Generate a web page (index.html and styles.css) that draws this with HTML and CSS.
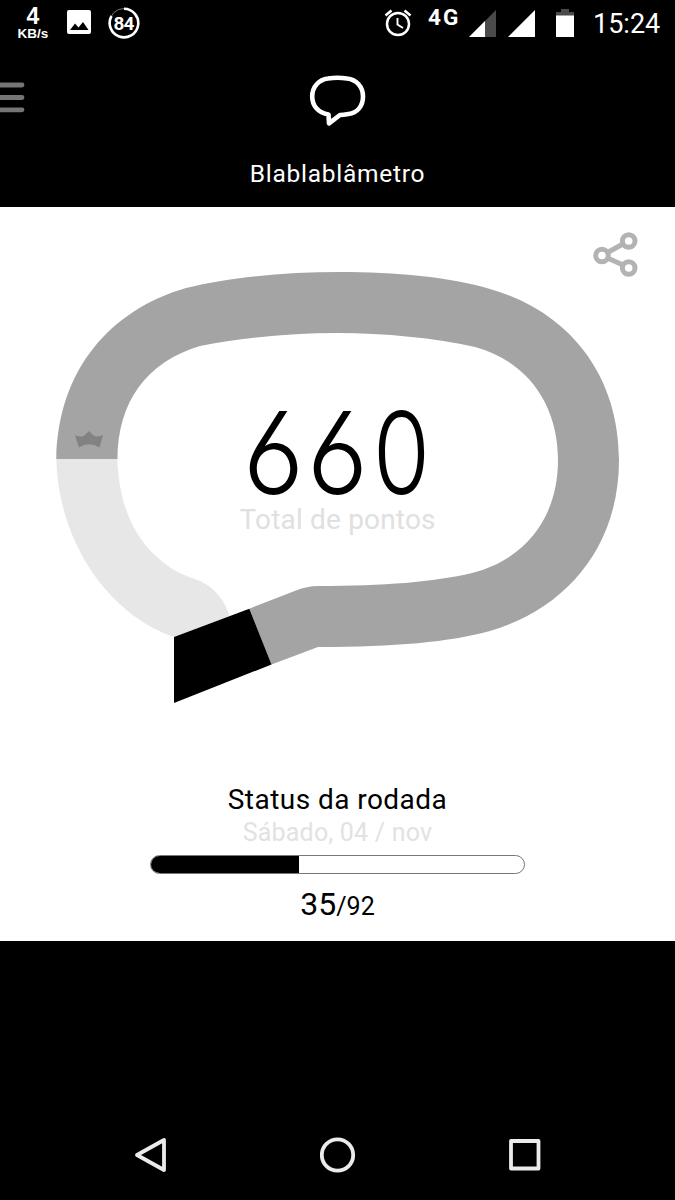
FILE: index.html
```
<!DOCTYPE html>
<html lang="pt-BR">
<head>
    <meta charset="UTF-8">
    <meta name="viewport" content="width=device-width, initial-scale=1.0">
    <title>Blablablâmetro</title>
    <link rel="stylesheet" href="styles.css">
</head>
<body>

    <div class="status-bar">
        <div class="speed">
            <span class="speed-value">4</span>
            <span class="speed-unit">KB/s</span>
        </div>
        <svg class="picture-icon" width="24" height="24" viewBox="0 0 24 24">
            <rect width="24" height="24" rx="2" fill="#fff"/>
            <path d="M3 20l5-6.5 3.5 4L16 12l5.5 8z" fill="#000"/>
        </svg>
        <svg class="percent-icon" width="32" height="32" viewBox="0 0 32 32">
            <circle cx="16" cy="16" r="14.5" fill="none" stroke="#777" stroke-width="1"/>
            <path d="M16 1.7A14.3 14.3 0 1 1 3.5 9" fill="none" stroke="#fff" stroke-width="2.6"/>
            <text x="16" y="22.5" text-anchor="middle" textLength="21" class="percent-text">84</text>
        </svg>
        <svg class="alarm-icon" width="28" height="28" viewBox="0 0 28 28">
            <g fill="none" stroke="#fff">
                <circle cx="14" cy="15" r="11" stroke-width="2.5"/>
                <path d="M1.5 6.5L7.5 1.5M26.5 6.5L20.5 1.5" stroke-width="2.6"/>
                <path d="M13.5 9v6.5l5.5 3.5" stroke-width="1.9"/>
            </g>
        </svg>
        <span class="network">4G</span>
        <svg class="signal-one" width="27" height="27" viewBox="0 0 27 27">
            <path d="M27 0v27H0z" fill="#4a4a4a"/>
            <path d="M16 11v16H0z" fill="#fff"/>
        </svg>
        <svg class="signal-two" width="27" height="27" viewBox="0 0 27 27">
            <path d="M27 0v27H0z" fill="#fff"/>
        </svg>
        <svg class="battery-icon" width="18" height="28" viewBox="0 0 18 28">
            <path d="M5 0h8v3h5v5H0V3h5z" fill="#4a4a4a"/>
            <path d="M0 6.5h18V28H0z" fill="#fff"/>
        </svg>
        <span class="clock">15:24</span>
    </div>

    <div class="header">
        <svg class="menu-icon" width="25" height="31" viewBox="0 0 25 31">
            <path d="M-3 3H22M-3 15.5H22M-3 27.8H22" stroke="#757575" stroke-width="4.8" stroke-linecap="round"/>
        </svg>
        <svg class="logo" width="58" height="54" viewBox="0 0 58 54">
            <path d="M19.5 40.5C9 39 3.2 31.5 3.2 22.5C3.2 12.5 10 5.7 19 4.5Q28.5 3 38 4.5C47.5 5.7 54 12.5 54 22.5C54 32.5 48 39 39.5 40Q34 41 31 41L20 49.3z" fill="none" stroke="#fff" stroke-width="4.6" stroke-linejoin="round"/>
        </svg>
        <h1>Blablablâmetro</h1>
    </div>

    <div class="content">
        <svg class="share-icon" width="46" height="46" viewBox="0 0 46 46">
            <g fill="none" stroke="#b3b3b3">
                <path d="M14.5 20.5L30 12M14.5 26L30 33" stroke-width="5"/>
                <circle cx="9" cy="23.5" r="6.3" stroke-width="5"/>
                <circle cx="35.7" cy="9" r="6.3" stroke-width="5"/>
                <circle cx="35.7" cy="36" r="6.3" stroke-width="5"/>
            </g>
        </svg>

        <svg class="gauge" width="675" height="440" viewBox="0 270 675 440">
            <path class="gauge-rest" d="M56.3 459C58 540 107 614 174 637L229.5 616C226 602 214 587 200 581C184 575 175 572 164 563C134 540 119 505 117.3 459z"/>
            <path class="gauge-fill" d="M56.3 459C58 370 110 310 186 288C230 277 285 272 340 272C395 272 450 277 490 289C565 310 619 371 619 460C619 548 565 609 490 631C450 642 395 647 318 647L271.5 664.5L249.3 608.7L296 590.5Q307 586 318 586C385 586 433 582 472 573C530 558 558 513 558 460C558 407 530 362 475 347C435 338 385 333 337 333C290 333 240 338 200 346C146 362 117.5 403 117.5 459z"/>
            <path class="gauge-start" d="M174 637L249.3 608.7L271.5 664.5L174 703z"/>
            <path class="crown" d="M75 435Q82 438 85 435L89 431L93 435Q96 438 103 435L99.5 447.5Q89 441 79 447.5z"/>
            <text class="points">
                <tspan x="243" y="493.5" textLength="61" lengthAdjust="spacingAndGlyphs">6</tspan><tspan x="307" y="493.5" textLength="61" lengthAdjust="spacingAndGlyphs">6</tspan><tspan x="373" y="493.5" textLength="57" lengthAdjust="spacingAndGlyphs">0</tspan>
            </text>
            <text class="points-label" x="239.5" y="529" textLength="196">Total de pontos</text>
        </svg>

        <div class="round">
            <h2>Status da rodada</h2>
            <p class="date">Sábado, 04 / nov</p>
            <div class="progress">
                <div class="progress-fill" style="width: 39.7%"></div>
            </div>
            <p class="score">35<span>/92</span></p>
        </div>
    </div>

    <div class="nav">
        <svg width="36" height="36" viewBox="0 0 36 36">
            <path d="M31 3v30L4 18z"/>
        </svg>
        <svg width="36" height="36" viewBox="0 0 36 36">
            <circle cx="17.5" cy="18" r="15.7"/>
        </svg>
        <svg width="36" height="36" viewBox="0 0 36 36">
            <rect x="4" y="4" width="27.5" height="27.5"/>
        </svg>
    </div>

</body>
</html>
```
FILE: styles.css
```
body {
    font-family: Roboto, sans-serif;
    margin: 0;
    padding: 0;
    height: 1200px;
    background-color: #000;
    display: flex;
    flex-direction: column;
    overflow: hidden;
}
svg {
    display: block;
    flex: none;
}
h1, h2, p {
    margin: 0;
    font-weight: normal;
}
.status-bar {
    height: 48px;
    display: flex;
    align-items: flex-start;
    color: white;
}
.speed {
    width: 34px;
    margin-left: 16px;
    padding-top: 7px;
    display: flex;
    flex-direction: column;
    align-items: center;
    font-family: "Liberation Sans", Arial, sans-serif;
    font-weight: bold;
}
.speed-value {
    font-size: 23px;
    line-height: 19px;
}
.speed-unit {
    font-size: 13.5px;
    line-height: 15px;
}
.picture-icon {
    margin: 10px 0 0 17px;
}
.percent-icon {
    margin: 7px 0 0 17px;
}
.percent-text {
    font-size: 19px;
    font-weight: bold;
    fill: white;
}
.alarm-icon {
    margin: 9px 0 0 244px;
}
.network {
    width: 34px;
    margin: 6px 0 0 16px;
    font-size: 22.5px;
    line-height: 22px;
    font-weight: bold;
    letter-spacing: 2px;
}
.signal-one {
    margin: 10px 0 0 7px;
}
.signal-two {
    margin: 10px 0 0 12px;
}
.battery-icon {
    margin: 9px 0 0 21px;
}
.clock {
    margin: 8px 0 0 19px;
    font-size: 27px;
    line-height: 32px;
}
.header {
    height: 159px;
    display: grid;
    grid-template-columns: 25px 1fr 25px;
    grid-template-rows: 110px 1fr;
    color: white;
}
.menu-icon {
    margin-top: 34px;
}
.logo {
    margin-top: 26px;
    justify-self: center;
}
.header h1 {
    grid-column: 1 / 4;
    text-align: center;
    font-size: 24.5px;
    line-height: 31px;
    letter-spacing: 0.75px;
}
.content {
    position: relative;
    height: 671px;
    padding-top: 63px;
    background-color: white;
}
.share-icon {
    position: absolute;
    top: 25px;
    right: 36px;
}
.gauge-fill {
    fill: #a4a4a4;
}
.gauge-rest {
    fill: #e7e7e7;
}
.gauge-start {
    fill: #000;
}
.crown {
    fill: #828282;
}
.points {
    font-family: Inter, sans-serif;
    font-size: 114px;
    font-weight: 300;
    font-feature-settings: "ss01", "cv03";
}
.points-label {
    font-size: 28px;
    fill: #e0e0e0;
}
.round {
    padding-top: 73px;
    display: flex;
    flex-direction: column;
    align-items: center;
}
.round h2 {
    font-size: 28px;
    line-height: 34px;
    letter-spacing: 0.45px;
}
.date {
    color: #e2e2e2;
    font-size: 25px;
    line-height: 31px;
    letter-spacing: 0.2px;
}
.progress {
    box-sizing: border-box;
    width: 375px;
    height: 19px;
    margin-top: 7px;
    border: 1px solid #777;
    border-radius: 10px;
    overflow: hidden;
}
.progress-fill {
    height: 100%;
    background-color: #000;
}
.score {
    margin-top: 11px;
    font-size: 32px;
    line-height: 38px;
}
.score span {
    font-size: 25px;
}
.nav {
    flex: 1;
    display: flex;
    justify-content: center;
    align-items: flex-end;
    gap: 151px;
    padding-bottom: 27px;
}
.nav svg {
    fill: none;
    stroke: #ebebeb;
    stroke-width: 3.8;
    stroke-linejoin: round;
}
```
